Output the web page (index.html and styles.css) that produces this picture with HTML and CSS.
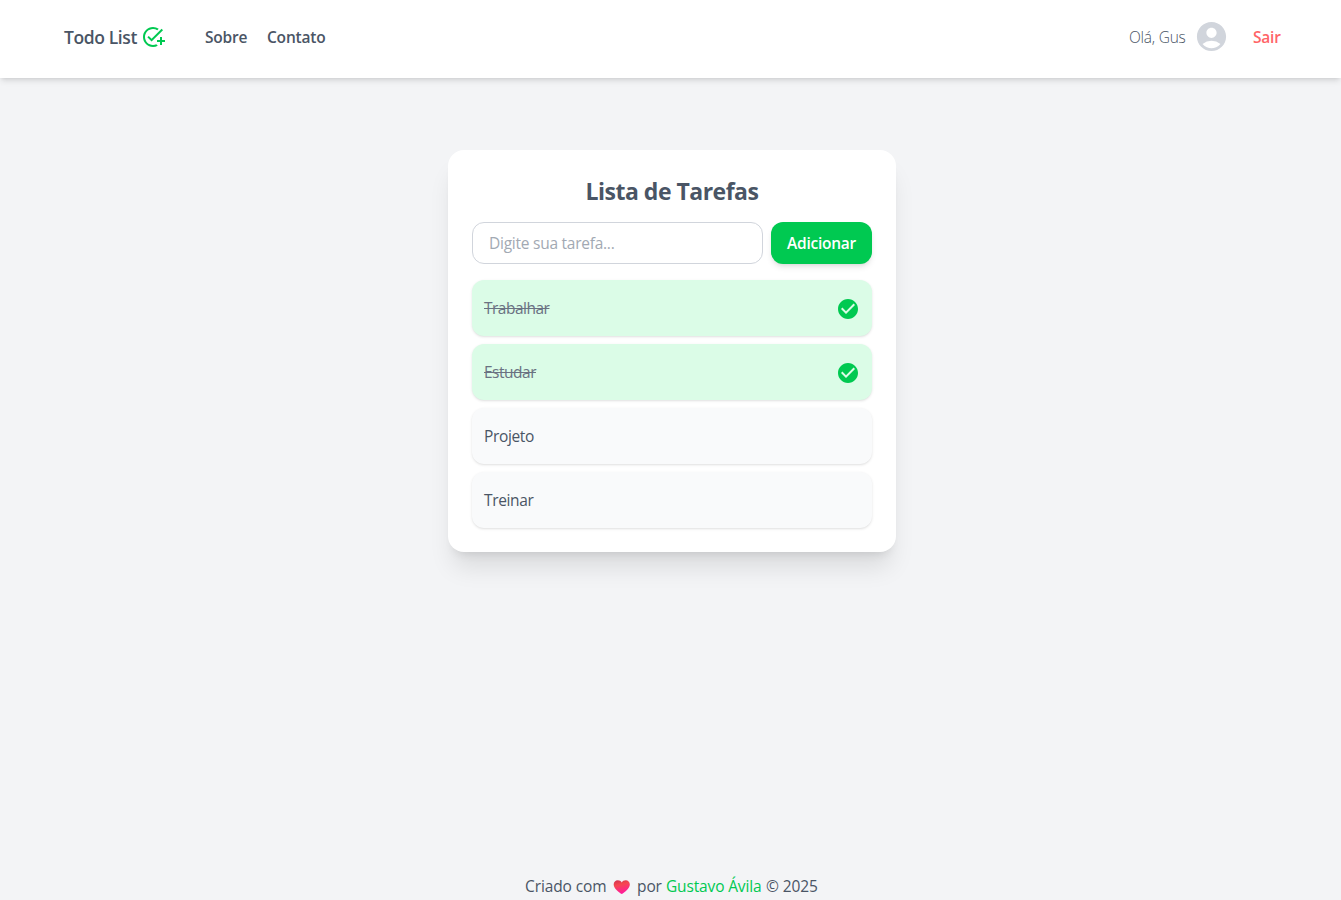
FILE: index.html
```html
<!DOCTYPE html>
<html lang="pt-BR">
<head>
<meta charset="utf-8">
<title>Todo List</title>
<link rel="stylesheet" href="styles.css">
</head>
<body>
<header class="header">
  <div class="brand"><span class="brand-name">Todo List</span>
    <svg class="brand-icon" viewBox="0 0 24 24"><path d="M22 5.18 10.59 16.6l-4.24-4.24 1.41-1.41 2.83 2.83 10-10L22 5.18zM12 20c-4.41 0-8-3.59-8-8s3.59-8 8-8c1.57 0 3.04.46 4.28 1.25l1.45-1.45A10.02 10.02 0 0 0 12 2C6.48 2 2 6.48 2 12s4.48 10 10 10c1.73 0 3.36-.44 4.78-1.22l-1.5-1.5c-1 .46-2.11.72-3.28.72zm7-5h-3v2h3v3h2v-3h3v-2h-3v-3h-2v3z"/></svg>
  </div>
  <nav class="nav"><a class="nav-about">Sobre</a><a class="nav-contact">Contato</a></nav>
  <div class="user"><span class="greeting">Olá, Gus</span>
    <svg class="avatar" viewBox="0 0 24 24"><path d="M12 2C6.48 2 2 6.48 2 12s4.48 10 10 10 10-4.48 10-10S17.52 2 12 2zm0 4c1.93 0 3.5 1.57 3.5 3.5S13.93 13 12 13s-3.5-1.57-3.5-3.5S10.07 6 12 6zm0 14c-2.03 0-4.43-.82-6.14-2.88a9.947 9.947 0 0 1 12.28 0C16.43 19.18 14.03 20 12 20z"/></svg>
    <a class="logout">Sair</a>
  </div>
</header>
<main class="main">
  <section class="card">
    <h1 class="title"><span>Lista de Tarefas</span></h1>
    <form class="form">
      <input class="input" type="text" placeholder="Digite sua tarefa...">
      <button class="button" type="button">Adicionar</button>
    </form>
    <ul class="tasks">
      <li class="task done"><span>Trabalhar</span><svg class="check" viewBox="0 0 24 24"><path d="M12 2C6.48 2 2 6.48 2 12s4.48 10 10 10 10-4.48 10-10S17.52 2 12 2zm-2 15-5-5 1.41-1.41L10 14.17l7.59-7.59L19 8l-9 9z"/></svg></li>
      <li class="task done"><span>Estudar</span><svg class="check" viewBox="0 0 24 24"><path d="M12 2C6.48 2 2 6.48 2 12s4.48 10 10 10 10-4.48 10-10S17.52 2 12 2zm-2 15-5-5 1.41-1.41L10 14.17l7.59-7.59L19 8l-9 9z"/></svg></li>
      <li class="task"><span>Projeto</span></li>
      <li class="task"><span>Treinar</span></li>
    </ul>
  </section>
</main>
<footer class="footer"><span class="made">Criado com</span>
  <svg class="heart" viewBox="0 0 18 16"><defs><linearGradient id="heart-fill" x1="0" y1="0" x2="0.3" y2="1"><stop offset="0" stop-color="#cf2f50"/><stop offset=".4" stop-color="#f5484f"/><stop offset="1" stop-color="#ff1c9c"/></linearGradient></defs><path fill="url(#heart-fill)" d="M9 15.3C6.500 13.600.7 9.700.7 5.400.7 2.700 2.600 1 4.900 1 6.700 1 8.200 1.900 9 3.300 9.800 1.900 11.300 1 13.100 1c2.300 0 4.200 1.700 4.200 4.400 0 4.300-5.800 8.200-8.300 9.900z"/></svg>
  <span class="by">por</span><a class="author">Gustavo Ávila</a><span class="year">© 2025</span></footer>
</body>
</html>
```
FILE: styles.css
```css
* { box-sizing: border-box; }
body {
  margin: 0;
  height: 900px;
  overflow: hidden;
  display: flex;
  flex-direction: column;
  background: #f3f4f6;
  color: #4a5565;
  font: 15.5px/24px "Segoe UI", "Open Sans", "Noto Sans", sans-serif;
  letter-spacing: -0.1px;
}
svg { display: block; flex: none; fill: currentColor; }
a, span { white-space: nowrap; }
.header {
  flex: none;
  height: 78px;
  display: flex;
  align-items: center;
  padding: 0 61px 4px 64px;
  background: #fff;
  box-shadow: 0 4px 6px -1px rgba(0,0,0,.1), 0 2px 4px -2px rgba(0,0,0,.1);
}
.brand { display: flex; align-items: center; width: 141px; font-size: 17.5px; font-weight: 600; }
.brand-name { width: 77px; letter-spacing: -0.4px; }
.brand-icon { width: 24px; height: 24px; color: #00c951; }
.nav { display: flex; font-weight: 600; font-size: 15.5px; letter-spacing: -0.2px; }
.nav-about { width: 62px; }
.user { display: flex; align-items: center; margin-left: auto; }
.greeting { width: 65px; font-weight: 300; letter-spacing: -0.25px; }
.avatar { width: 35px; height: 35px; margin-bottom: 1px; color: #d1d5dc; }
.logout { margin-left: 24px; width: 27px; color: #ff6467; font-weight: 600; letter-spacing: -0.2px; }
.main { flex: 1; padding: 72px 0 0 3px; }
.card {
  width: 448px;
  margin: 0 auto;
  padding: 24px;
  border-radius: 16px;
  background: #fff;
  box-shadow: 0 20px 25px -5px rgba(0,0,0,.1), 0 8px 10px -6px rgba(0,0,0,.1);
}
.title { margin: 0; padding-top: 1px; height: 48px; font-size: 23px; line-height: 32px; font-weight: 700; text-align: center; letter-spacing: -0.5px; }
.form { display: flex; gap: 8px; margin-bottom: 16px; }
.input {
  flex: 1;
  min-width: 0;
  height: 42px;
  padding: 8px 16px;
  border: 1px solid #d1d5dc;
  border-radius: 12px;
  background: #fff;
  font: inherit;
  letter-spacing: -0.25px;
}
.input::placeholder { color: #a2a9b3; opacity: 1; }
.button {
  width: 101px;
  padding: 0;
  border: 0;
  border-radius: 12px;
  background: #00c951;
  color: #fff;
  font: inherit;
  font-weight: 600;
  letter-spacing: -0.25px;
  box-shadow: 0 4px 6px -1px rgba(0,0,0,.1), 0 2px 4px -2px rgba(0,0,0,.1);
}
.tasks { display: grid; gap: 8px; margin: 0; padding: 0; list-style: none; }
.task {
  height: 56px;
  display: flex;
  align-items: center;
  justify-content: space-between;
  padding: 0 12px;
  border-radius: 12px;
  background: #f9fafb;
  letter-spacing: -0.35px;
  box-shadow: 0 1px 3px rgba(0,0,0,.1), 0 1px 2px -1px rgba(0,0,0,.1);
}
.done { background: #dbfce7; color: #6a7282; letter-spacing: -0.5px; }
.done span { text-decoration: line-through; }
.check { width: 24px; height: 24px; margin-top: 2px; color: #00c951; }
.footer { flex: none; height: 26px; padding-left: 525px; display: flex; }
.made { width: 88px; }
.heart { width: 17.5px; height: 16px; margin-top: 5px; }
.by { margin-left: 6.5px; width: 29px; }
.author { width: 100px; color: #00c951; letter-spacing: -0.15px; }
```
